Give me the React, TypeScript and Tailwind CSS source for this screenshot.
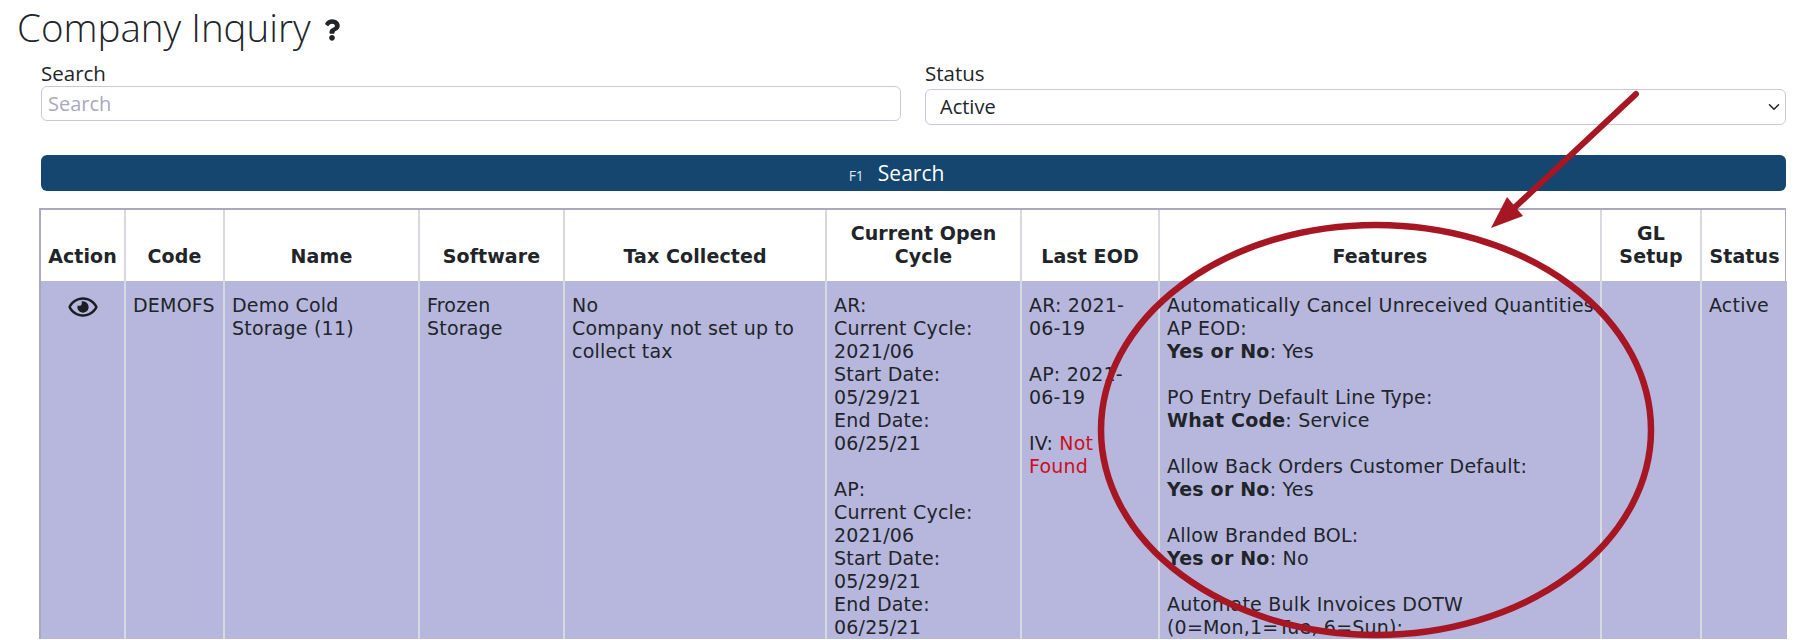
import { FaQuestion, FaRegEye } from 'react-icons/fa';
import { ChevronDown } from 'lucide-react';

const cols = [84, 99, 195, 145, 262, 195, 138, 442, 100, 86];
const heads = ['Action', 'Code', 'Name', 'Software', 'Tax Collected', 'Current Open Cycle', 'Last EOD', 'Features', 'GL Setup', 'Status'];

function Cycle({ name }: { name: string }) {
  return (
    <>
      {name}:<br />
      Current Cycle:<br />
      2021/06<br />
      Start Date:<br />
      05/29/21<br />
      End Date:<br />
      06/25/21<br />
    </>
  );
}

function Feature({ title, label, value }: { title: string; label: string; value: string }) {
  return (
    <>
      {title}:<br />
      <b>{label}</b>: {value}<br />
      <br />
    </>
  );
}

export default function App() {
  return (
    <div className="relative h-[640px] w-[1808px] overflow-hidden bg-white text-[#212529] font-['Open_Sans',sans-serif]">
      {/* Title */}
      <h1 className="pl-[17px] h-[61px] pb-[7px] flex items-center gap-[13px] text-[38.5px] leading-[48px] font-light">
        Company Inquiry
        <FaQuestion className="w-[16px] h-[22px] mt-[5px]" />
      </h1>

      {/* Filters */}
      <div className="pl-[41px] pr-[22px] flex gap-[24px]">
        <div className="w-[860px]">
          <label className="block text-[20.5px] leading-[25px]">Search</label>
          <input
            placeholder="Search"
            className="block w-full h-[35px] px-[6px] text-[20px] border border-[#c9c7df] rounded-[6px] placeholder:text-[#a9a8bd] outline-none"
          />
        </div>
        <div className="flex-1">
          <label className="block text-[20.5px] leading-[25px]">Status</label>
          <div className="relative mt-[3px]">
            <select className="appearance-none block w-full h-[36px] pl-[14px] text-[20px] border border-[#c9c7df] rounded-[6px] bg-white outline-none">
              <option>Active</option>
            </select>
            <ChevronDown className="absolute right-[3px] top-[9px] w-[18px] h-[18px] text-[#222]" />
          </div>
        </div>
      </div>

      {/* Search button */}
      <div className="pl-[41px] pr-[22px] mt-[30px]">
        <button className="w-full h-[36px] pt-[1px] flex items-center justify-center gap-[14px] pr-[34px] rounded-[6px] bg-[#14466f] text-white text-[21px]">
          <span className="text-[14px] mt-[3px] text-[#dfe6ee]">F1</span>
          Search
        </button>
      </div>

      {/* Results */}
      <div className="ml-[39px] mt-[17px] w-[1747px] border-t-2 border-l-2 border-r border-[#aaa9bb] font-['DejaVu_Sans',sans-serif] text-[19px] leading-[23px] tracking-[0.2px]">
        <table className="w-full table-fixed border-collapse">
          <colgroup>
            {cols.map((w, i) => (
              <col key={i} style={{ width: w }} />
            ))}
          </colgroup>
          <thead>
            <tr className="h-[71px]">
              {heads.map((h) => (
                <th key={h} className="px-[4px] pb-[13px] align-bottom border-x-2 first:border-l-0 last:border-r-0 border-[#d8d8e0] text-center font-bold text-[19px] leading-[23px] tracking-[0.1px]">
                  {h}
                </th>
              ))}
            </tr>
          </thead>
          <tbody>
            <tr className="bg-[#b7b7de] align-top">
              <td className="border-r-2 border-[#d8d8e0] pt-[13px]">
                <FaRegEye className="mx-auto w-[32px] h-[26px] text-[#1c1c24]" />
              </td>
              <td className="border-x-2 border-[#d8d8e0] px-[7px] pt-[13px]">DEMOFS</td>
              <td className="border-x-2 border-[#d8d8e0] px-[7px] pt-[13px]">Demo Cold Storage (11)</td>
              <td className="border-x-2 border-[#d8d8e0] px-[7px] pt-[13px]">Frozen Storage</td>
              <td className="border-x-2 border-[#d8d8e0] px-[7px] pt-[13px]">
                No<br />
                Company not set up to collect tax
              </td>
              <td className="border-x-2 border-[#d8d8e0] px-[7px] pt-[13px]">
                <Cycle name="AR" />
                <br />
                <Cycle name="AP" />
              </td>
              <td className="border-x-2 border-[#d8d8e0] px-[7px] pt-[13px]">
                AR: 2021-06-19<br />
                <br />
                AP: 2021-06-19<br />
                <br />
                IV: <span className="text-[#cc0f1a]">Not Found</span>
              </td>
              <td className="border-x-2 border-[#d8d8e0] pl-[7px] pr-0 pt-[13px]">
                <Feature title="Automatically Cancel Unreceived Quantities AP EOD" label="Yes or No" value="Yes" />
                <Feature title="PO Entry Default Line Type" label="What Code" value="Service" />
                <Feature title="Allow Back Orders Customer Default" label="Yes or No" value="Yes" />
                <Feature title="Allow Branded BOL" label="Yes or No" value="No" />
                Automate Bulk Invoices DOTW<br />
                (0=Mon,1=Tue, 6=Sun):
              </td>
              <td className="border-x-2 border-[#d8d8e0] px-[7px] pt-[13px]"></td>
              <td className="border-l-2 border-[#d8d8e0] px-[7px] pt-[13px]">Active</td>
            </tr>
          </tbody>
        </table>
      </div>

      {/* Red annotation */}
      <svg className="absolute inset-0 pointer-events-none" width="1808" height="640" viewBox="0 0 1808 640">
        <ellipse cx="1376" cy="430" rx="275" ry="205" fill="none" stroke="#a61723" strokeWidth="6.5" />
        <line x1="1636" y1="94" x2="1512" y2="210" stroke="#a61723" strokeWidth="6" strokeLinecap="round" />
        <polygon points="1491,228 1507,197 1523,216" fill="#a61723" />
      </svg>
    </div>
  );
}
